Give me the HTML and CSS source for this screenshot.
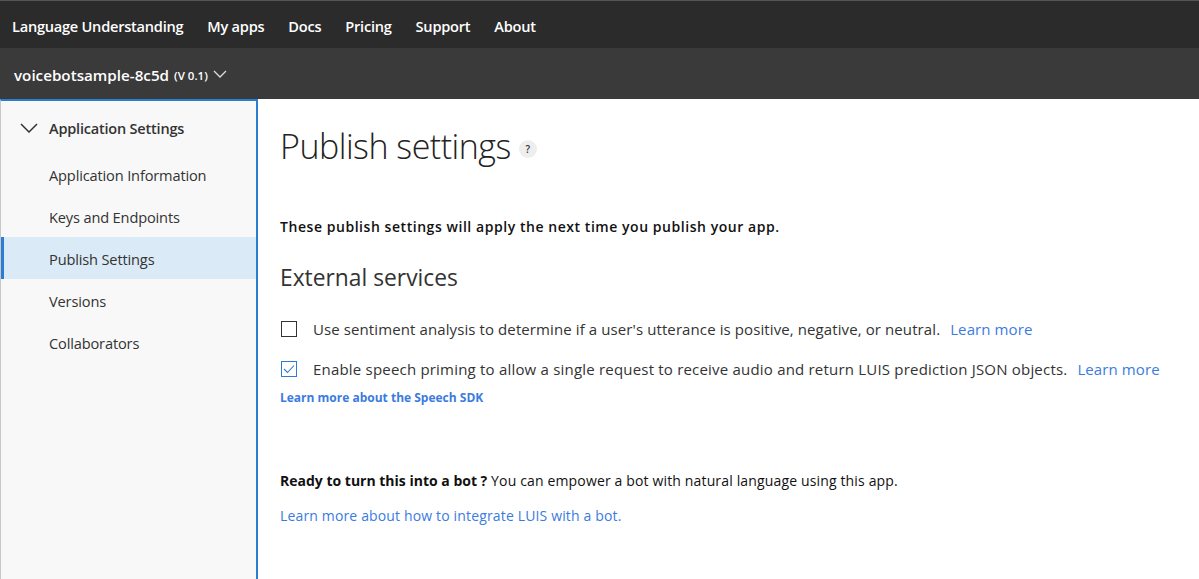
FILE: index.html
```html
<!DOCTYPE html>
<html>
<head>
<meta charset="utf-8">
<link rel="stylesheet" href="styles.css">
</head>
<body>
<header class="topnav">
  <a class="brand">Language Understanding</a>
  <a class="navlink">My apps</a>
  <a class="navlink">Docs</a>
  <a class="navlink">Pricing</a>
  <a class="navlink">Support</a>
  <a class="navlink">About</a>
</header>
<div class="appbar">
  <span class="appname">voicebotsample-8c5d</span>
  <span class="version">(V 0.1)</span>
  <svg class="appchev" width="14" height="8" viewBox="0 0 14 8"><path d="M1 1 L7 7 L13 1" fill="none" stroke="#ddd" stroke-width="1.3"/></svg>
</div>
<div class="layout">
  <nav class="sidebar">
    <div class="group">
      <svg class="groupchev" width="18" height="10" viewBox="0 0 18 10"><path d="M1 1 L9 9 L17 1" fill="none" stroke="#333" stroke-width="1.5"/></svg>
      <span>Application Settings</span>
    </div>
    <a class="item">Application Information</a>
    <a class="item">Keys and Endpoints</a>
    <a class="item active">Publish Settings</a>
    <a class="item">Versions</a>
    <a class="item">Collaborators</a>
  </nav>
  <main class="content">
    <h1 class="title">Publish settings <span class="help">?</span></h1>
    <p class="intro">These publish settings will apply the next time you publish your app.</p>
    <h2 class="subtitle">External services</h2>
    <div class="option">
      <span class="box"></span>
      <span class="label">Use sentiment analysis to determine if a user's utterance is positive, negative, or neutral.</span>
      <a class="link">Learn more</a>
    </div>
    <div class="option">
      <span class="box checked"><svg width="12" height="10" viewBox="0 0 12 10"><path d="M1 5 L4.5 8.5 L11 1.5" fill="none" stroke="#2b7cd3" stroke-width="1.1"/></svg></span>
      <span class="label wide">Enable speech priming to allow a single request to receive audio and return LUIS prediction JSON objects.</span>
      <a class="link">Learn more</a>
    </div>
    <a class="sdk">Learn more about the Speech SDK</a>
    <p class="bot"><b>Ready to turn this into a bot ?</b> You can empower a bot with natural language using this app.</p>
    <a class="botlink">Learn more about how to integrate LUIS with a bot.</a>
  </main>
</div>
</body>
</html>
```
FILE: styles.css
```css
* { box-sizing: border-box; }
html, body { margin: 0; padding: 0; height: 100%; overflow: hidden; }
body {
  font-family: "Open Sans", "Noto Sans", sans-serif;
  color: #222;
  background: #fff;
  display: flex;
  flex-direction: column;
}
a { text-decoration: none; cursor: pointer; }
.topnav {
  height: 48px;
  background: #2b2b2b;
  border-top: 1px solid #555;
  display: flex;
  align-items: center;
  padding-left: 12px;
  padding-top: 3px;
  gap: 24px;
  flex-shrink: 0;
}
.topnav a {
  color: #fff;
  font-weight: 600;
  font-size: 14.6px;
  letter-spacing: -0.25px;
}
.appbar {
  height: 51px;
  background: #3a3a3a;
  display: flex;
  align-items: center;
  padding-left: 14px;
  padding-top: 3px;
  flex-shrink: 0;
}
.appname {
  color: #fff;
  font-weight: 600;
  font-size: 15.2px;
  letter-spacing: 0;
}
.version {
  color: #fff;
  font-weight: 600;
  font-size: 11.5px;
  margin-left: 5px;
}
.appchev { margin-left: 5px; margin-top: -2px; }
.layout {
  flex: 1;
  display: flex;
  min-height: 0;
}
.sidebar {
  width: 258px;
  flex-shrink: 0;
  background: #f8f8f8;
  border-top: 2px solid #2b7cd3;
  border-right: 2px solid #2b7cd3;
  border-left: 1px solid #c8c8c8;
  display: flex;
  flex-direction: column;
  padding-top: 6px;
}
.group {
  height: 42px;
  display: flex;
  align-items: center;
  font-size: 14.5px;
  font-weight: 600;
  color: #333;
  letter-spacing: -0.2px;
}
.groupchev { margin-left: 19px; margin-right: 11px; }
.item {
  height: 42px;
  display: flex;
  align-items: center;
  padding-left: 45px;
  padding-top: 2px;
  font-size: 14.6px;
  color: #333;
  letter-spacing: -0.15px;
  border-left: 3px solid transparent;
}
.group + .item { margin-top: 4px; }
.item.active {
  background: #dbeaf7;
  border-left-color: #2b7cd3;
}
.content {
  flex: 1;
  padding-left: 22px;
  padding-top: 24px;
}
.title {
  margin: 0;
  font-size: 34px;
  font-weight: 300;
  color: #222;
  letter-spacing: -0.5px;
  display: flex;
  align-items: center;
  height: 46px;
}
.help {
  display: inline-flex;
  align-items: center;
  justify-content: center;
  width: 18px;
  height: 18px;
  border-radius: 50%;
  background: #eee;
  font-size: 10px;
  font-weight: 600;
  color: #333;
  margin-left: 8px;
  margin-top: 6px;
  letter-spacing: 0;
}
.intro {
  margin: 47px 0 0;
  font-size: 14px;
  font-weight: 600;
  color: #111;
  line-height: 22px;
  letter-spacing: 0.55px;
}
.subtitle {
  margin: 25px 0 0;
  font-size: 22.8px;
  font-weight: 400;
  color: #333;
  line-height: 30px;
  letter-spacing: 0;
}
.option {
  display: flex;
  align-items: center;
  height: 24px;
  font-size: 15px;
  color: #333;
  letter-spacing: 0.1px;
}
.label.wide { letter-spacing: 0.2px; }
.subtitle + .option { margin-top: 24px; }
.option + .option { margin-top: 16px; }
.box {
  width: 16px;
  height: 16px;
  border: 1px solid #333;
  margin-left: 1px;
  margin-right: 16px;
  display: inline-flex;
  align-items: center;
  justify-content: center;
  flex-shrink: 0;
}
.box.checked { border-color: #2b7cd3; }
.link { color: #3b7be0; margin-left: 10px; }
.sdk {
  display: block;
  margin-top: 8px;
  font-size: 12px;
  font-weight: 700;
  color: #3b7be0;
}
.bot {
  margin: 64px 0 0;
  font-size: 14px;
  color: #111;
  line-height: 22px;
  letter-spacing: 0.15px;
}
.bot b { font-weight: 700; letter-spacing: 0; }
.botlink {
  display: block;
  margin-top: 14px;
  font-size: 14px;
  color: #3b7be0;
  letter-spacing: 0.15px;
}
```
